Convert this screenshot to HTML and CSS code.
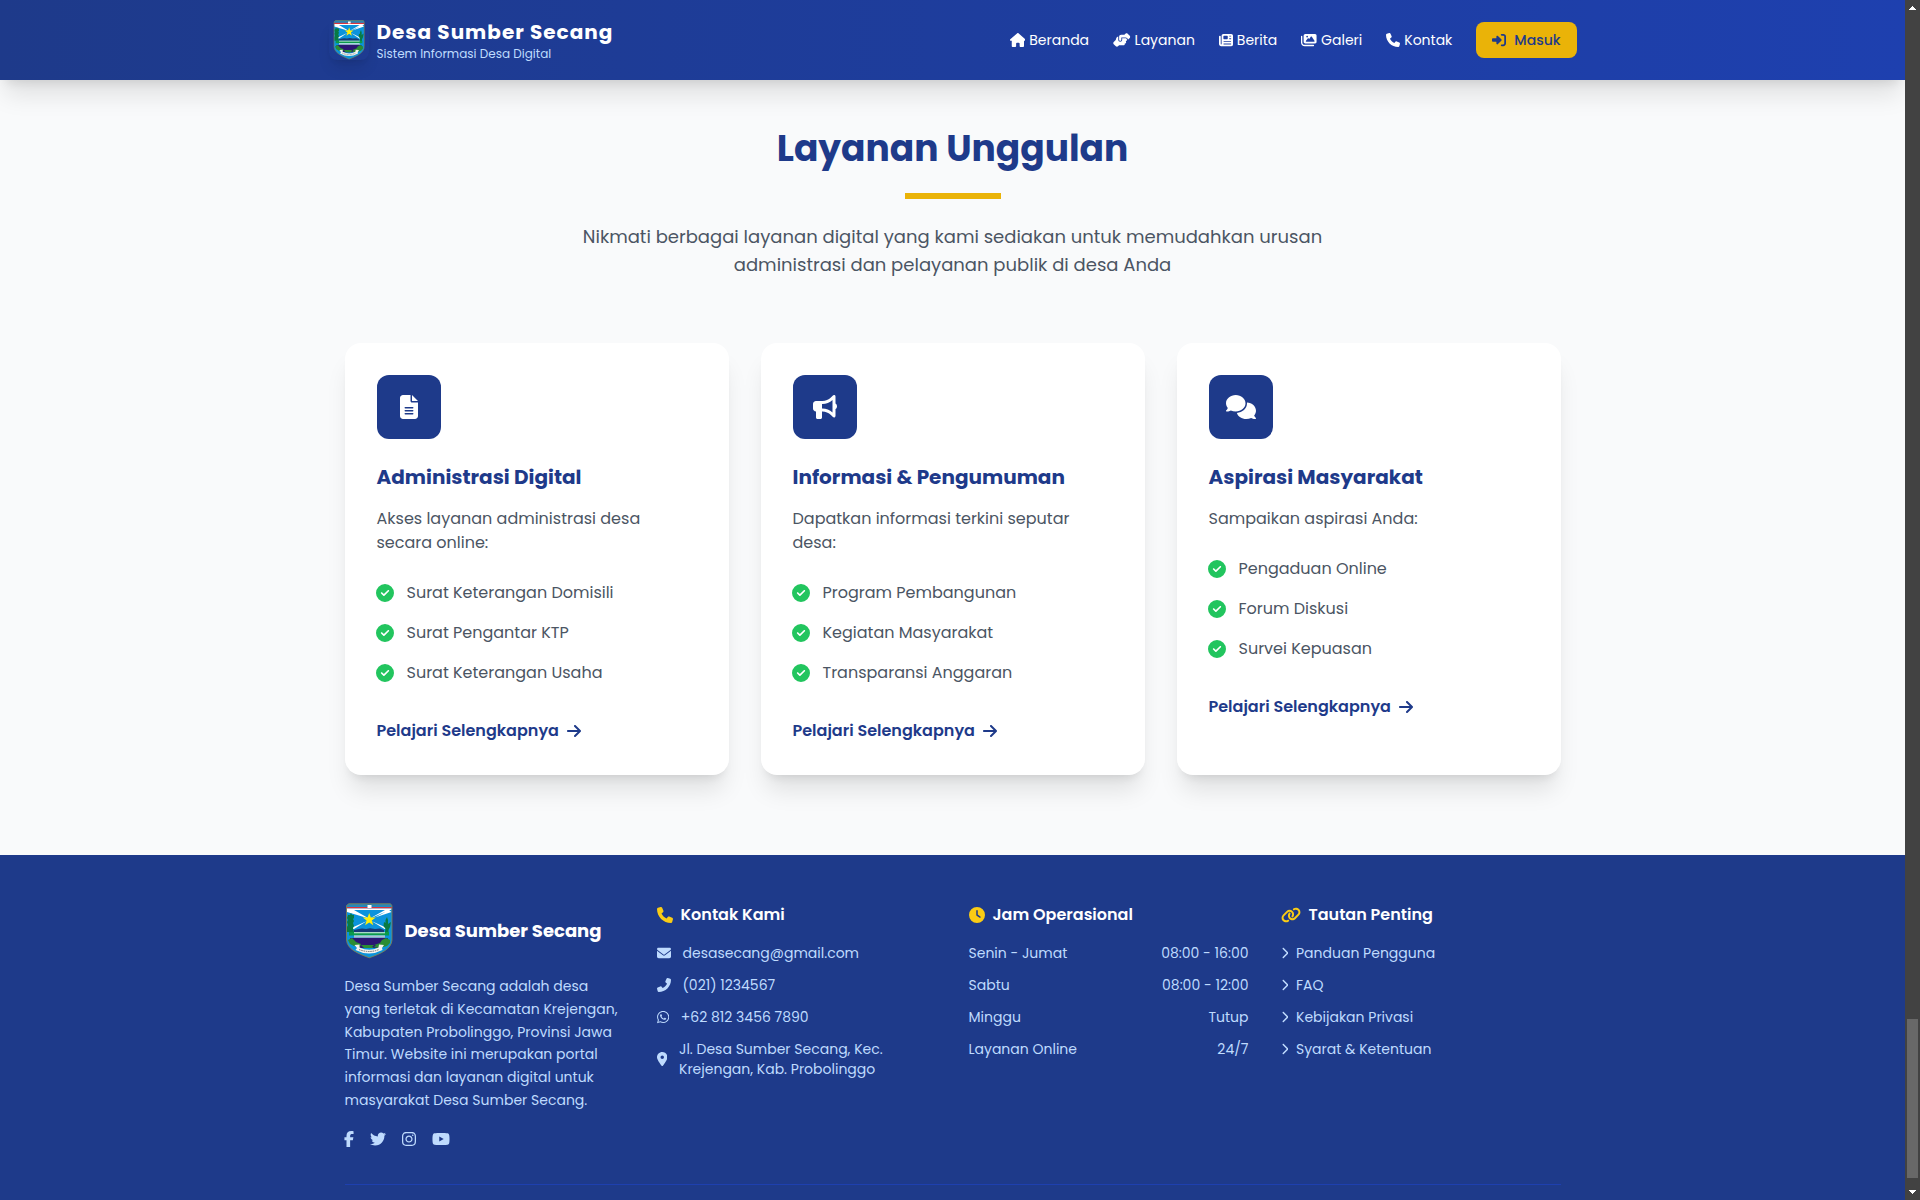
FILE: index.html
```html
<!DOCTYPE html>
<html lang="id">
<head>
<meta charset="utf-8">
<title>Desa Sumber Secang</title>
<link rel="stylesheet" href="styles.css">
</head>
<body>
<svg class="sprite" aria-hidden="true">
  <symbol id="house" viewBox="0 0 576 512"><path d="M575.8 255.5c0 18-15 32.1-32 32.1h-32l.7 160.2c0 2.7-.2 5.4-.5 8.1V472c0 22.1-17.9 40-40 40H456c-1.1 0-2.2 0-3.3-.1c-1.4 .1-2.8 .1-4.2 .1H416 392c-22.1 0-40-17.9-40-40V448 384c0-17.7-14.3-32-32-32H256c-17.7 0-32 14.3-32 32v64 24c0 22.1-17.9 40-40 40H160 128.1c-1.5 0-3-.1-4.5-.2c-1.2 .1-2.4 .2-3.6 .2H104c-22.1 0-40-17.9-40-40V360c0-.9 0-1.9 .1-2.8V287.6H32c-18 0-32-14-32-32.1c0-9 3-17 10-24L266.4 8c7-7 15-8 22-8s15 2 21 7L564.8 231.5c8 7 12 15 11 24z"/></symbol>
  <symbol id="handshake" viewBox="0 0 640 512"><path d="M544 248v3.3l69.7-69.7c21.9-21.9 21.9-57.3 0-79.2L535.6 24.4c-21.9-21.9-57.3-21.9-79.2 0L416.3 64.5c-2.7-.3-5.5-.5-8.3-.5H296c-37.1 0-67.6 28-71.6 64H224V248c0 22.1 17.9 40 40 40s40-17.9 40-40V176c0 0 0-.1 0-.1V160l16 0 136 0c0 0 0 0 .1 0H464c44.2 0 80 35.8 80 80v8zM336 192v56c0 39.8-32.2 72-72 72s-72-32.2-72-72V129.4c-35.9 6.2-65.8 32.3-76 68.2L99.5 255.2 26.3 328.4c-21.9 21.9-21.9 57.3 0 79.2l78.1 78.1c21.9 21.9 57.3 21.9 79.2 0l37.7-37.7c.9 0 1.8 .1 2.7 .1H384c26.5 0 48-21.5 48-48c0-5.6-1-11-2.7-16H432c26.5 0 48-21.5 48-48c0-12.8-5-24.4-13.2-33c25.7-5 45.1-27.6 45.2-54.8v-.4c-.1-30.8-25.1-55.8-56-55.8c0 0 0 0 0 0l-120 0z"/></symbol>
  <symbol id="newspaper" viewBox="0 0 512 512"><path d="M96 96c0-35.3 28.7-64 64-64H448c35.3 0 64 28.7 64 64V416c0 35.3-28.7 64-64 64H80c-44.2 0-80-35.8-80-80V128c0-17.7 14.3-32 32-32s32 14.3 32 32V400c0 8.8 7.2 16 16 16s16-7.2 16-16V96zm64 24v80c0 13.3 10.7 24 24 24H296c13.3 0 24-10.7 24-24V120c0-13.3-10.7-24-24-24H184c-13.3 0-24 10.7-24 24zm208-8c0 8.8 7.2 16 16 16h48c8.8 0 16-7.2 16-16s-7.2-16-16-16H384c-8.8 0-16 7.2-16 16zm0 96c0 8.8 7.2 16 16 16h48c8.8 0 16-7.2 16-16s-7.2-16-16-16H384c-8.8 0-16 7.2-16 16zM160 304c0 8.8 7.2 16 16 16H432c8.8 0 16-7.2 16-16s-7.2-16-16-16H176c-8.8 0-16 7.2-16 16zm0 96c0 8.8 7.2 16 16 16H432c8.8 0 16-7.2 16-16s-7.2-16-16-16H176c-8.8 0-16 7.2-16 16z"/></symbol>
  <symbol id="images" viewBox="0 0 576 512"><path d="M160 32c-35.3 0-64 28.7-64 64V320c0 35.3 28.7 64 64 64H512c35.3 0 64-28.7 64-64V96c0-35.3-28.7-64-64-64H160zM396 138.7l96 144c4.9 7.4 5.4 16.8 1.2 24.6S480.9 320 472 320H328 280 200c-9.2 0-17.6-5.3-21.6-13.6s-2.9-18.2 2.9-25.4l64-80c4.6-5.7 11.4-9 18.7-9s14.2 3.3 18.7 9l17.3 21.6 56-84C360.5 132 368 128 376 128s15.5 4 20 10.7zM192 128a32 32 0 1 1 64 0 32 32 0 1 1 -64 0zM48 120c0-13.3-10.7-24-24-24S0 106.7 0 120V344c0 75.1 60.9 136 136 136H456c13.3 0 24-10.7 24-24s-10.7-24-24-24H136c-48.6 0-88-39.4-88-88V120z"/></symbol>
  <symbol id="phone" viewBox="0 0 512 512"><path d="M164.9 24.6c-7.7-18.6-28-28.5-47.4-23.2l-88 24C12.1 30.2 0 46 0 64C0 311.4 200.6 512 448 512c18 0 33.8-12.1 38.6-29.5l24-88c5.3-19.4-4.6-39.7-23.2-47.4l-96-40c-16.3-6.8-35.2-2.1-46.3 11.6L304.7 368C234.3 334.7 177.3 277.7 144 207.3L193.3 167c13.7-11.2 18.4-30 11.6-46.3l-40-96z"/></symbol>
  <symbol id="login" viewBox="0 0 512 512"><path d="M217.9 105.9L340.7 228.7c7.2 7.2 11.3 17.1 11.3 27.3s-4.1 20.1-11.3 27.3L217.9 406.1c-6.4 6.4-15 9.9-24 9.9c-18.7 0-33.9-15.2-33.9-33.9l0-62.1L32 320c-17.7 0-32-14.3-32-32l0-64c0-17.7 14.3-32 32-32l128 0 0-62.1c0-18.7 15.2-33.9 33.9-33.9c9 0 17.6 3.6 24 9.9zM352 416l64 0c17.7 0 32-14.3 32-32l0-256c0-17.7-14.3-32-32-32l-64 0c-17.7 0-32-14.3-32-32s14.3-32 32-32l64 0c53 0 96 43 96 96l0 256c0 53-43 96-96 96l-64 0c-17.7 0-32-14.3-32-32s14.3-32 32-32z"/></symbol>
  <symbol id="file" viewBox="0 0 384 512"><path d="M64 0C28.7 0 0 28.7 0 64V448c0 35.3 28.7 64 64 64H320c35.3 0 64-28.7 64-64V160H256c-17.7 0-32-14.3-32-32V0H64zM256 0V128H384L256 0zM112 256H272c8.8 0 16 7.2 16 16s-7.2 16-16 16H112c-8.8 0-16-7.2-16-16s7.2-16 16-16zm0 64H272c8.8 0 16 7.2 16 16s-7.2 16-16 16H112c-8.8 0-16-7.2-16-16s7.2-16 16-16zm0 64H272c8.8 0 16 7.2 16 16s-7.2 16-16 16H112c-8.8 0-16-7.2-16-16s7.2-16 16-16z"/></symbol>
  <symbol id="bullhorn" viewBox="0 0 512 512"><path d="M480 32c0-12.9-7.8-24.6-19.8-29.6s-25.7-2.2-34.9 6.9L381.7 53c-48 48-113.1 75-181 75H192 160 64c-35.3 0-64 28.7-64 64v96c0 35.3 28.7 64 64 64l0 128c0 17.7 14.3 32 32 32h64c17.7 0 32-14.3 32-32V352l8.7 0c67.9 0 133 27 181 75l43.6 43.6c9.2 9.2 22.9 11.9 34.9 6.9s19.8-16.6 19.8-29.6V300.4c18.6-8.8 32-32.5 32-60.4s-13.4-51.6-32-60.4V32zm-64 76.7V240 371.3C357.2 317.8 280.5 288 200.7 288H192V192h8.7c79.8 0 156.5-29.8 215.3-83.3z"/></symbol>
  <symbol id="comments" viewBox="0 0 640 512"><path d="M208 352c114.9 0 208-78.8 208-176S322.9 0 208 0S0 78.8 0 176c0 38.6 14.7 74.3 39.6 103.4c-3.5 9.4-8.7 17.7-14.2 24.7c-4.8 6.2-9.7 11-13.3 14.3c-1.8 1.6-3.3 2.9-4.3 3.7c-.5 .4-.9 .7-1.1 .8l-.2 .2C1 327.2-1.4 334.4 .8 340.9S9.1 352 16 352c21.8 0 43.8-5.6 62.1-12.5c9.2-3.5 17.8-7.4 25.2-11.4C134.1 343.3 169.8 352 208 352zM448 176c0 112.3-99.1 196.9-216.5 207C255.8 457.4 336.4 512 432 512c38.2 0 73.9-8.7 104.7-23.9c7.5 4 16 7.9 25.2 11.4c18.3 6.9 40.3 12.5 62.1 12.5c6.9 0 13.1-4.5 15.2-11.1c2.1-6.6-.2-13.8-5.8-17.9l-.2-.2c-.2-.2-.6-.4-1.1-.8c-1-.8-2.5-2-4.3-3.7c-3.6-3.3-8.5-8.1-13.3-14.3c-5.5-7-10.7-15.4-14.2-24.7c24.9-29 39.6-64.7 39.6-103.4c0-92.8-84.9-168.9-192.6-175.5c.4 5.1 .6 10.3 .6 15.5z"/></symbol>
  <symbol id="check" viewBox="0 0 512 512"><path d="M256 512A256 256 0 1 0 256 0a256 256 0 1 0 0 512zM369 209L241 337c-9.4 9.4-24.6 9.4-33.9 0l-64-64c-9.4-9.4-9.4-24.6 0-33.9s24.6-9.4 33.9 0l47 47L335 175c9.4-9.4 24.6-9.4 33.9 0s9.4 24.6 0 33.9z"/></symbol>
  <symbol id="arrow" viewBox="0 0 448 512"><path d="M438.6 278.6c12.5-12.5 12.5-32.8 0-45.3l-160-160c-12.5-12.5-32.8-12.5-45.3 0s-12.5 32.8 0 45.3L338.8 224 32 224c-17.7 0-32 14.3-32 32s14.3 32 32 32l306.7 0L233.4 393.4c-12.5 12.5-12.5 32.8 0 45.3s32.8 12.5 45.3 0l160-160z"/></symbol>
  <symbol id="facebook" viewBox="0 0 320 512"><path d="M80 299.3V512H196V299.3h86.5l18-97.8H196V166.9c0-51.7 20.3-71.5 72.7-71.5c16.3 0 29.4 .4 37 1.2V7.9C291.4 4 256.4 0 236.2 0C129.3 0 80 50.5 80 159.4v42.1H14v97.8H80z"/></symbol>
  <symbol id="twitter" viewBox="0 0 512 512"><path d="M459.37 151.716c.325 4.548.325 9.097.325 13.645 0 138.72-105.583 298.558-298.558 298.558-59.452 0-114.68-17.219-161.137-47.106 8.447.974 16.568 1.299 25.34 1.299 49.055 0 94.213-16.568 130.274-44.832-46.132-.975-84.792-31.188-98.112-72.772 6.498.974 12.995 1.624 19.818 1.624 9.421 0 18.843-1.3 27.614-3.573-48.081-9.747-84.143-51.98-84.143-102.985v-1.299c13.969 7.797 30.214 12.67 47.431 13.319-28.264-18.843-46.781-51.005-46.781-87.391 0-19.492 5.197-37.36 14.294-52.954 51.655 63.675 129.3 105.258 216.365 109.807-1.624-7.797-2.599-15.918-2.599-24.04 0-57.828 46.782-104.934 104.934-104.934 30.213 0 57.502 12.67 76.67 33.137 23.715-4.548 46.456-13.32 66.599-25.34-7.798 24.366-24.366 44.833-46.132 57.827 21.117-2.273 41.584-8.122 60.426-16.243-14.292 20.791-32.161 39.308-52.628 54.253z"/></symbol>
  <symbol id="instagram" viewBox="0 0 448 512"><path d="M224.1 141c-63.6 0-114.9 51.3-114.9 114.9s51.3 114.9 114.9 114.9S339 319.5 339 255.9 287.7 141 224.1 141zm0 189.6c-41.1 0-74.7-33.5-74.7-74.7s33.5-74.7 74.7-74.7 74.7 33.5 74.7 74.7-33.6 74.7-74.7 74.7zm146.4-194.3c0 14.9-12 26.8-26.8 26.8-14.9 0-26.8-12-26.8-26.8s12-26.8 26.8-26.8 26.8 12 26.8 26.8zm76.1 27.2c-1.7-35.9-9.9-67.7-36.2-93.9-26.2-26.2-58-34.4-93.9-36.2-37-2.1-147.9-2.1-184.9 0-35.8 1.7-67.6 9.9-93.9 36.1s-34.4 58-36.2 93.9c-2.1 37-2.1 147.9 0 184.9 1.7 35.9 9.9 67.7 36.2 93.9s58 34.4 93.9 36.2c37 2.1 147.9 2.1 184.9 0 35.9-1.7 67.7-9.9 93.9-36.2 26.2-26.2 34.4-58 36.2-93.9 2.1-37 2.1-147.8 0-184.8zM398.8 388c-7.8 19.6-22.9 34.7-42.6 42.6-29.5 11.7-99.5 9-132.1 9s-102.7 2.6-132.1-9c-19.6-7.8-34.7-22.9-42.6-42.6-11.7-29.5-9-99.5-9-132.1s-2.6-102.7 9-132.1c7.8-19.6 22.9-34.7 42.6-42.6 29.5-11.7 99.5-9 132.1-9s102.7-2.6 132.1 9c19.6 7.8 34.7 22.9 42.6 42.6 11.7 29.5 9 99.5 9 132.1s2.7 102.7-9 132.1z"/></symbol>
  <symbol id="youtube" viewBox="0 0 576 512"><path d="M549.655 124.083c-6.281-23.65-24.787-42.276-48.284-48.597C458.781 64 288 64 288 64S117.22 64 74.629 75.486c-23.497 6.322-42.003 24.947-48.284 48.597-11.412 42.867-11.412 132.305-11.412 132.305s0 89.438 11.412 132.305c6.281 23.65 24.787 41.5 48.284 47.821C117.22 448 288 448 288 448s170.78 0 213.371-11.486c23.497-6.321 42.003-24.171 48.284-47.821 11.412-42.867 11.412-132.305 11.412-132.305s0-89.438-11.412-132.305zm-317.51 213.508V175.185l142.739 81.205-142.739 81.201z"/></symbol>
  <symbol id="envelope" viewBox="0 0 512 512"><path d="M48 64C21.5 64 0 85.5 0 112c0 15.1 7.1 29.3 19.2 38.4L236.8 313.6c11.4 8.5 27 8.5 38.4 0L492.8 150.4c12.1-9.1 19.2-23.3 19.2-38.4c0-26.5-21.5-48-48-48H48zM0 176V384c0 35.3 28.7 64 64 64H448c35.3 0 64-28.7 64-64V176L294.4 339.2c-22.8 17.1-54 17.1-76.8 0L0 176z"/></symbol>
  <symbol id="whatsapp" viewBox="0 0 448 512"><path d="M380.9 97.1C339 55.1 283.2 32 223.9 32c-122.4 0-222 99.6-222 222 0 39.1 10.2 77.3 29.6 111L0 480l117.7-30.9c32.4 17.7 68.9 27 106.1 27h.1c122.3 0 224.1-99.6 224.1-222 0-59.3-25.2-115-67.1-157zm-157 341.6c-33.2 0-65.7-8.9-94-25.7l-6.7-4-69.8 18.3L72 359.2l-4.4-7c-18.5-29.4-28.2-63.3-28.2-98.2 0-101.7 82.8-184.5 184.6-184.5 49.3 0 95.6 19.2 130.4 54.1 34.8 34.9 56.2 81.2 56.1 130.5 0 101.8-84.9 184.6-186.6 184.6zm101.2-138.2c-5.5-2.8-32.8-16.2-37.9-18-5.1-1.9-8.8-2.8-12.5 2.8-3.7 5.6-14.3 18-17.6 21.8-3.2 3.7-6.5 4.2-12 1.4-32.6-16.3-54-29.1-75.5-66-5.7-9.8 5.7-9.1 16.3-30.3 1.8-3.7.9-6.9-.5-9.7-1.4-2.8-12.5-30.1-17.1-41.2-4.5-10.8-9.1-9.3-12.5-9.5-3.2-.2-6.9-.2-10.6-.2-3.7 0-9.7 1.4-14.8 6.9-5.1 5.6-19.4 19-19.4 46.3 0 27.3 19.9 53.7 22.6 57.4 2.8 3.7 39.1 59.7 94.8 83.8 35.2 15.2 49 16.5 66.6 13.9 10.7-1.6 32.8-13.4 37.4-26.4 4.6-13 4.6-24.1 3.2-26.4-1.3-2.5-5-3.9-10.5-6.6z"/></symbol>
  <symbol id="pin" viewBox="0 0 384 512"><path d="M215.7 499.2C267 435 384 279.4 384 192C384 86 298 0 192 0S0 86 0 192c0 87.4 117 243 168.3 307.2c12.3 15.3 35.1 15.3 47.4 0zM192 128a64 64 0 1 1 0 128 64 64 0 1 1 0-128z"/></symbol>
  <symbol id="clock" viewBox="0 0 512 512"><path d="M256 0a256 256 0 1 1 0 512A256 256 0 1 1 256 0zM232 120V256c0 8 4 15.5 10.7 20l96 64c11 7.4 25.9 4.4 33.3-6.7s4.4-25.9-6.7-33.3L280 243.2V120c0-13.3-10.7-24-24-24s-24 10.7-24 24z"/></symbol>
  <symbol id="link" viewBox="0 0 640 512"><path d="M579.8 267.7c56.5-56.5 56.5-148 0-204.5c-50-50-128.8-56.5-186.3-15.4l-1.6 1.1c-14.4 10.3-17.7 30.3-7.4 44.6s30.3 17.7 44.6 7.4l1.6-1.1c32.1-22.9 76-19.3 103.8 8.6c31.5 31.5 31.5 82.5 0 114L422.3 334.8c-31.5 31.5-82.5 31.5-114 0c-27.9-27.9-31.5-71.8-8.6-103.8l1.1-1.6c10.3-14.4 6.9-34.4-7.4-44.6s-34.4-6.9-44.6 7.4l-1.1 1.6C206.5 251.2 213 330 263 380c56.5 56.5 148 56.5 204.5 0L579.8 267.7zM60.2 244.3c-56.5 56.5-56.5 148 0 204.5c50 50 128.8 56.5 186.3 15.4l1.6-1.1c14.4-10.3 17.7-30.3 7.4-44.6s-30.3-17.7-44.6-7.4l-1.6 1.1c-32.1 22.9-76 19.3-103.8-8.6C74 372 74 321 105.5 289.5L217.7 177.2c31.5-31.5 82.5-31.5 114 0c27.9 27.9 31.5 71.8 8.6 103.9l-1.1 1.6c-10.3 14.4-6.9 34.4 7.4 44.6s34.4 6.9 44.6-7.4l1.1-1.6C433.5 260.8 427 182 377 132c-56.5-56.5-148-56.5-204.5 0L60.2 244.3z"/></symbol>
  <symbol id="chevron" viewBox="0 0 320 512"><path d="M310.6 233.4c12.5 12.5 12.5 32.8 0 45.3l-192 192c-12.5 12.5-32.8 12.5-45.3 0s-12.5-32.8 0-45.3L242.7 256 73.4 86.6c-12.5-12.5-12.5-32.8 0-45.3s32.8-12.5 45.3 0l192 192z"/></symbol>
  <symbol id="crest" viewBox="0 0 48 56" preserveAspectRatio="none">
    <clipPath id="shield"><path d="M3.5 .8H45.5L47 2.8V37C46.5 46 36 50.5 24.3 54.8C12.500 50.500 2 46 1.500 37V2.800Z"/></clipPath>
    <g clip-path="url(#shield)">
      <rect width="48" height="56" fill="#0b93dc"/>
      <path fill="#2a86b4" d="M0 0H48V3.500H0Z"/>
      <path fill="#d8343c" d="M0 4H48V5.500H0Z"/>
      <path fill="#fff" d="M22.500 2H26.500V5H22.500ZM2 5.500H46.500V6.500L42.500 8 24.800 15.500 40 7H9L24 15.500 2 9ZM46.500 9 30 14.500 44 7ZM22 18 9 26H4ZM26.500 18 39.500 26H44Z"/>
      <path fill="#0b93dc" d="M12 7H37L25 14H24Z"/>
      <path fill="#087a45" d="M3 12h2l1-2 1 2h2v3l-1 1 1 2-1 2 1 3-1 2 1 4H2v-5l1-2-1-3 1-2-1-2ZM39 19l1.500 1v-3l1.500-3 1 3v4l3-2-1 5-1.500 3v4h-4l1-5-2-3Z"/>
      <path fill="#173a78" d="M9 29v-2l5-1 3-.5 4 .5 4-.8 5 .8 5-.5 4 1.500v2Z"/>
      <path fill="#0b9a4a" d="M4 29H44V32.500H4Z"/>
      <path fill="#dceef0" d="M9 29.200H40V30.200H9ZM9 32.500H40V34.500H9Z"/>
      <path fill="#7f93b2" d="M9 33.500H40V34.500H9Z"/>
      <path fill="#2a1673" d="M5 35H43L40 42 33 45H15L8 42Z"/>
      <path fill="#2a8c34" d="M3 37l4-2 4 4 5 2-1 3-6-1-4-2ZM45 37l-4-2-4 2-2 3-6 2-2 2 8 1 7-2 3-3ZM16 42h15l-3 3h-9Z"/>
      <path fill="#f2f2ee" d="m9.500 42 5-.5v3q10 4.500 19 0l.5-3 5 .5-2 3 .5 2Q24 54 10.500 47l1.500-2Z"/>
      <path fill="none" stroke="#6f7374" stroke-dasharray="1.500 .8" d="M14 46.500q10 4 20 0"/>
      <path fill="#ffef0a" d="m24.200 10 1.600 4.600h4.900l-3.900 2.900 1.500 4.700-4.100-2.800-4.100 2.800 1.500-4.700-3.900-2.900h4.900Z"/>
    </g>
    <path fill="none" stroke="#8d8145" stroke-width=".8" d="M3.500 .8H45.500L47 2.800V37C46.500 46 36 50.500 24.300 54.800C12.500 50.500 2 46 1.500 37V2.800Z"/>
  </symbol>
</svg>

<div class="page">
  <header class="topbar">
    <div class="topbar-inner">
      <a class="brand">
        <span class="brand-logo"><svg><use href="#crest"/></svg></span>
        <span class="brand-text"><span class="brand-name">Desa Sumber Secang</span><span class="brand-sub">Sistem Informasi Desa Digital</span></span>
      </a>
      <nav class="menu">
        <a><svg class="icon w576"><use href="#house"/></svg>Beranda</a>
        <a><svg class="icon w640"><use href="#handshake"/></svg>Layanan</a>
        <a><svg class="icon"><use href="#newspaper"/></svg>Berita</a>
        <a><svg class="icon w576"><use href="#images"/></svg>Galeri</a>
        <a><svg class="icon"><use href="#phone"/></svg>Kontak</a>
        <a class="login"><svg class="icon"><use href="#login"/></svg>Masuk</a>
      </nav>
    </div>
  </header>

  <main class="services">
    <div class="heading">
      <h2>Layanan Unggulan</h2>
      <div class="rule"></div>
      <p>Nikmati berbagai layanan digital yang kami sediakan untuk memudahkan urusan administrasi dan pelayanan publik di desa Anda</p>
    </div>
    <div class="cards">
      <article class="card">
        <div class="badge"><svg class="icon w384"><use href="#file"/></svg></div>
        <h3>Administrasi Digital</h3>
        <p>Akses layanan administrasi desa secara online:</p>
        <ul>
          <li><svg class="icon"><use href="#check"/></svg>Surat Keterangan Domisili</li>
          <li><svg class="icon"><use href="#check"/></svg>Surat Pengantar KTP</li>
          <li><svg class="icon"><use href="#check"/></svg>Surat Keterangan Usaha</li>
        </ul>
        <a class="more">Pelajari Selengkapnya<svg class="icon w448"><use href="#arrow"/></svg></a>
      </article>
      <article class="card">
        <div class="badge"><svg class="icon"><use href="#bullhorn"/></svg></div>
        <h3>Informasi &amp; Pengumuman</h3>
        <p>Dapatkan informasi terkini seputar desa:</p>
        <ul>
          <li><svg class="icon"><use href="#check"/></svg>Program Pembangunan</li>
          <li><svg class="icon"><use href="#check"/></svg>Kegiatan Masyarakat</li>
          <li><svg class="icon"><use href="#check"/></svg>Transparansi Anggaran</li>
        </ul>
        <a class="more">Pelajari Selengkapnya<svg class="icon w448"><use href="#arrow"/></svg></a>
      </article>
      <article class="card">
        <div class="badge"><svg class="icon w640"><use href="#comments"/></svg></div>
        <h3>Aspirasi Masyarakat</h3>
        <p>Sampaikan aspirasi Anda:</p>
        <ul>
          <li><svg class="icon"><use href="#check"/></svg>Pengaduan Online</li>
          <li><svg class="icon"><use href="#check"/></svg>Forum Diskusi</li>
          <li><svg class="icon"><use href="#check"/></svg>Survei Kepuasan</li>
        </ul>
        <a class="more">Pelajari Selengkapnya<svg class="icon w448"><use href="#arrow"/></svg></a>
      </article>
    </div>
  </main>

  <footer class="footer">
    <div class="footer-inner">
      <div class="columns">
        <section>
          <div class="footer-brand"><svg><use href="#crest"/></svg><h3>Desa Sumber Secang</h3></div>
          <p class="about">Desa Sumber Secang adalah desa yang terletak di Kecamatan Krejengan, Kabupaten Probolinggo, Provinsi Jawa Timur. Website ini merupakan portal informasi dan layanan digital untuk masyarakat Desa Sumber Secang.</p>
          <div class="social">
            <svg class="icon w320"><use href="#facebook"/></svg>
            <svg class="icon"><use href="#twitter"/></svg>
            <svg class="icon w448"><use href="#instagram"/></svg>
            <svg class="icon w576"><use href="#youtube"/></svg>
          </div>
        </section>
        <section>
          <h4><svg class="icon"><use href="#phone"/></svg>Kontak Kami</h4>
          <ul class="contact">
            <li><svg class="icon"><use href="#envelope"/></svg>desasecang@gmail.com</li>
            <li><svg class="icon flip"><use href="#phone"/></svg>(021) 1234567</li>
            <li><svg class="icon w448"><use href="#whatsapp"/></svg>+62 812 3456 7890</li>
            <li><svg class="icon w384"><use href="#pin"/></svg><span>Jl. Desa Sumber Secang, Kec. Krejengan, Kab. Probolinggo</span></li>
          </ul>
        </section>
        <section>
          <h4><svg class="icon"><use href="#clock"/></svg>Jam Operasional</h4>
          <ul class="hours">
            <li><span>Senin - Jumat</span><span>08:00 - 16:00</span></li>
            <li><span>Sabtu</span><span>08:00 - 12:00</span></li>
            <li><span>Minggu</span><span>Tutup</span></li>
            <li><span>Layanan Online</span><span>24/7</span></li>
          </ul>
        </section>
        <section>
          <h4><svg class="icon w640"><use href="#link"/></svg>Tautan Penting</h4>
          <ul class="links">
            <li><svg class="icon w320"><use href="#chevron"/></svg>Panduan Pengguna</li>
            <li><svg class="icon w320"><use href="#chevron"/></svg>FAQ</li>
            <li><svg class="icon w320"><use href="#chevron"/></svg>Kebijakan Privasi</li>
            <li><svg class="icon w320"><use href="#chevron"/></svg>Syarat &amp; Ketentuan</li>
          </ul>
        </section>
      </div>
    </div>
  </footer>
</div>

<div class="scrollbar">
  <svg class="scroll-arrow" viewBox="0 0 7 4" shape-rendering="crispEdges"><path d="M3 0h1v1h1v1h1v1h1v1H0V3h1V2h1V1h1Z"/></svg>
  <div class="thumb"></div>
  <svg class="scroll-arrow" viewBox="0 0 7 4" shape-rendering="crispEdges"><path d="M0 0h7v1H6v1H5v1H4v1H3V3H2V2H1V1H0Z"/></svg>
</div>
</body>
</html>
```
FILE: styles.css
```css
*, *::before, *::after { box-sizing: border-box; }
body, h2, h3, h4, p, ul { margin: 0; padding: 0; }
ul { list-style: none; }

body {
  display: flex;
  height: 1200px;
  overflow: hidden;
  background: #f9fafb;
  font-family: Poppins, Inter, sans-serif;
  font-size: 16px;
  line-height: 24px;
}

.sprite { position: absolute; width: 0; height: 0; }
.icon { flex: none; width: 1em; height: 1em; fill: currentColor; }
.w320 { width: .625em; }
.w384 { width: .75em; }
.w448 { width: .875em; }
.w576 { width: 1.125em; }
.w640 { width: 1.25em; }
.flip { transform: scaleX(-1); }

.page { flex: 1; height: 1200px; overflow: hidden; }

/* Top bar */
.topbar {
  position: relative;
  z-index: 1;
  height: 80px;
  background: linear-gradient(to right, #1e3a8a, #1e40af);
  box-shadow: 0 20px 25px -5px rgba(0, 0, 0, .1), 0 8px 10px -6px rgba(0, 0, 0, .1);
}
.topbar-inner {
  display: flex;
  align-items: center;
  justify-content: space-between;
  max-width: 1280px;
  height: 80px;
  margin: 0 auto;
  padding: 0 16px;
}
.brand { display: flex; align-items: center; gap: 8px; }
.brand-logo {
  display: flex;
  justify-content: center;
  width: 40px;
  height: 40px;
  border-radius: 8px;
  box-shadow: 0 10px 15px -3px rgba(0, 0, 0, .1), 0 4px 6px -4px rgba(0, 0, 0, .1);
}
.brand-logo svg { width: 32px; height: 40px; }
.brand-text { display: flex; flex-direction: column; }
.brand-name { color: #fff; font-size: 20px; font-weight: 700; line-height: 28px; letter-spacing: 1px; }
.brand-sub { color: #bfdbfe; font-size: 12px; line-height: 16px; }

.menu { display: flex; align-items: center; gap: 24px; color: #fff; font-size: 14px; line-height: 20px; }
.menu a { display: flex; align-items: center; gap: 4px; }
.menu .login {
  gap: 8px;
  padding: 8px 16px;
  border-radius: 8px;
  background: #eab308;
  color: #1e3a8a;
  font-weight: 500;
}

/* Services */
.services {
  height: 775px;
  padding-top: 49px;
  background: #f9fafb;
}
.heading { display: flex; flex-direction: column; align-items: center; text-align: center; }
.heading h2 { color: #1e3a8a; font-size: 36px; font-weight: 700; line-height: 40px; }
.rule { width: 96px; height: 6px; margin: 24px 0; background: #eab308; }
.heading p { max-width: 768px; color: #4b5563; font-size: 18px; line-height: 28px; }

.cards {
  display: grid;
  grid-template-columns: repeat(3, 1fr);
  gap: 32px;
  max-width: 1216px;
  margin: 64px auto 0;
}
.card {
  padding: 32px;
  border-radius: 16px;
  background: #fff;
  color: #4b5563;
  box-shadow: 0 20px 25px -5px rgba(0, 0, 0, .1), 0 8px 10px -6px rgba(0, 0, 0, .1);
}
.badge {
  display: flex;
  align-items: center;
  justify-content: center;
  width: 64px;
  height: 64px;
  margin-bottom: 24px;
  border-radius: 12px;
  background: #1e3a8a;
  color: #fff;
  font-size: 24px;
}
.card h3 { margin-bottom: 16px; color: #1e3a8a; font-size: 20px; font-weight: 700; line-height: 28px; }
.card p { margin-bottom: 24px; }
.card ul { display: flex; flex-direction: column; gap: 12px; margin-bottom: 32px; }
.card li { display: flex; align-items: center; gap: 12px; height: 28px; }
.card li .icon { margin: 0 .5px 0 -.5px; color: #22c55e; font-size: 18px; }
.more { display: inline-flex; align-items: center; gap: 8px; color: #1e3a8a; font-weight: 600; }

/* Footer */
.footer { height: 345px; overflow: hidden; background: #1e3a8a; color: #bfdbfe; font-size: 14px; line-height: 20px; }
.footer-inner { max-width: 1216px; margin: 0 auto; padding-top: 48px; }
.columns {
  display: grid;
  grid-template-columns: repeat(4, 1fr);
  gap: 32px;
  padding-bottom: 32px;
  border-bottom: 1px solid #1e40af;
}
.footer-brand { display: flex; align-items: center; gap: 12px; margin-bottom: 16px; }
.footer-brand svg { width: 48px; height: 56px; }
.footer-brand h3 { color: #fff; font-size: 18px; font-weight: 700; line-height: 28px; }
.about { margin-bottom: 16px; line-height: 22.75px; }
.social { display: flex; align-items: center; gap: 16px; height: 24px; padding-bottom: 1.500px; font-size: 16px; }
.social .icon { margin: 0 .5px 0 -.5px; }
.footer h4 {
  display: flex;
  align-items: center;
  gap: 8px;
  margin-bottom: 16px;
  color: #fff;
  font-size: 16px;
  font-weight: 600;
  line-height: 24px;
}
.footer h4 .icon { color: #facc15; }
.contact, .hours, .links { display: flex; flex-direction: column; gap: 12px; }
.contact li { display: flex; align-items: center; gap: 12px; }
.hours li { display: flex; justify-content: space-between; }
.links li { display: flex; align-items: center; gap: 8px; }
.links .icon { font-size: 12px; }

/* Scrollbar */
.scrollbar {
  display: flex;
  flex: none;
  flex-direction: column;
  align-items: center;
  width: 15px;
  height: 1200px;
  padding: 6px 0;
  background: #424242;
}
.scroll-arrow { width: 7px; height: 4px; fill: #fff; }
.thumb { width: 11px; height: 159px; margin: auto 0 12px; background: #686868; }
```
